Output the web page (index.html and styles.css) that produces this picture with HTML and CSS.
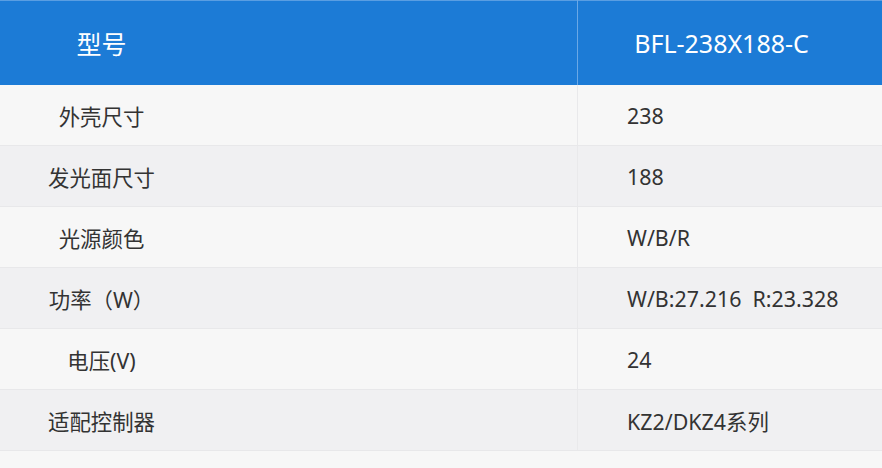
FILE: index.html
```html
<!DOCTYPE html>
<html lang="zh-CN">
<head>
<meta charset="utf-8">
<title>参数</title>
<link rel="stylesheet" href="styles.css">
</head>
<body>
<table class="spec">
  <thead>
    <tr class="head">
      <th class="c-name"><span class="label">型号</span></th>
      <th class="c-val">BFL-238X188-C</th>
    </tr>
  </thead>
  <tbody>
    <tr class="odd"><td class="c-name"><span class="label">外壳尺寸</span></td><td class="c-val">238</td></tr>
    <tr class="even"><td class="c-name"><span class="label">发光面尺寸</span></td><td class="c-val">188</td></tr>
    <tr class="odd"><td class="c-name"><span class="label">光源颜色</span></td><td class="c-val">W/B/R</td></tr>
    <tr class="even"><td class="c-name"><span class="label">功率（W）</span></td><td class="c-val">W/B:27.216&nbsp;&nbsp;R:23.328</td></tr>
    <tr class="odd"><td class="c-name"><span class="label">电压(V)</span></td><td class="c-val">24</td></tr>
    <tr class="even"><td class="c-name"><span class="label">适配控制器</span></td><td class="c-val">KZ2/DKZ4系列</td></tr>
  </tbody>
</table>
</body>
</html>
```
FILE: styles.css
```css
html, body {
  margin: 0;
  padding: 0;
  background: #f7f7f7;
}
body {
  font-family: "Noto Sans", "Noto Sans CJK SC", sans-serif;
  color: #333333;
}
.spec {
  width: 882px;
  border-collapse: collapse;
  table-layout: fixed;
}
.spec .c-name { width: 577px; }
.head th {
  height: 84px;
  background: #1c7bd6;
  border-top: 1px solid #5a9ee2;
  color: #ffffff;
  font-weight: normal;
  font-size: 25px;
  padding: 0;
  vertical-align: middle;
}
.head .c-name {
  border-right: 1px solid #6aa8e6;
  text-align: left;
}
.head .c-val {
  text-align: center;
  padding-right: 17px;
}
.label {
  display: block;
  width: 203px;
  text-align: center;
}
.spec td {
  height: 60px;
  padding: 0;
  font-size: 21.4px;
  border-bottom: 1px solid #e8e8ea;
  vertical-align: middle;
}
.spec td.c-name {
  border-right: 1px solid #e9e9eb;
}
.spec td.c-val {
  padding-left: 49px;
}
.odd td { background: #f7f7f7; }
.even td { background: #f0f0f2; }
```
